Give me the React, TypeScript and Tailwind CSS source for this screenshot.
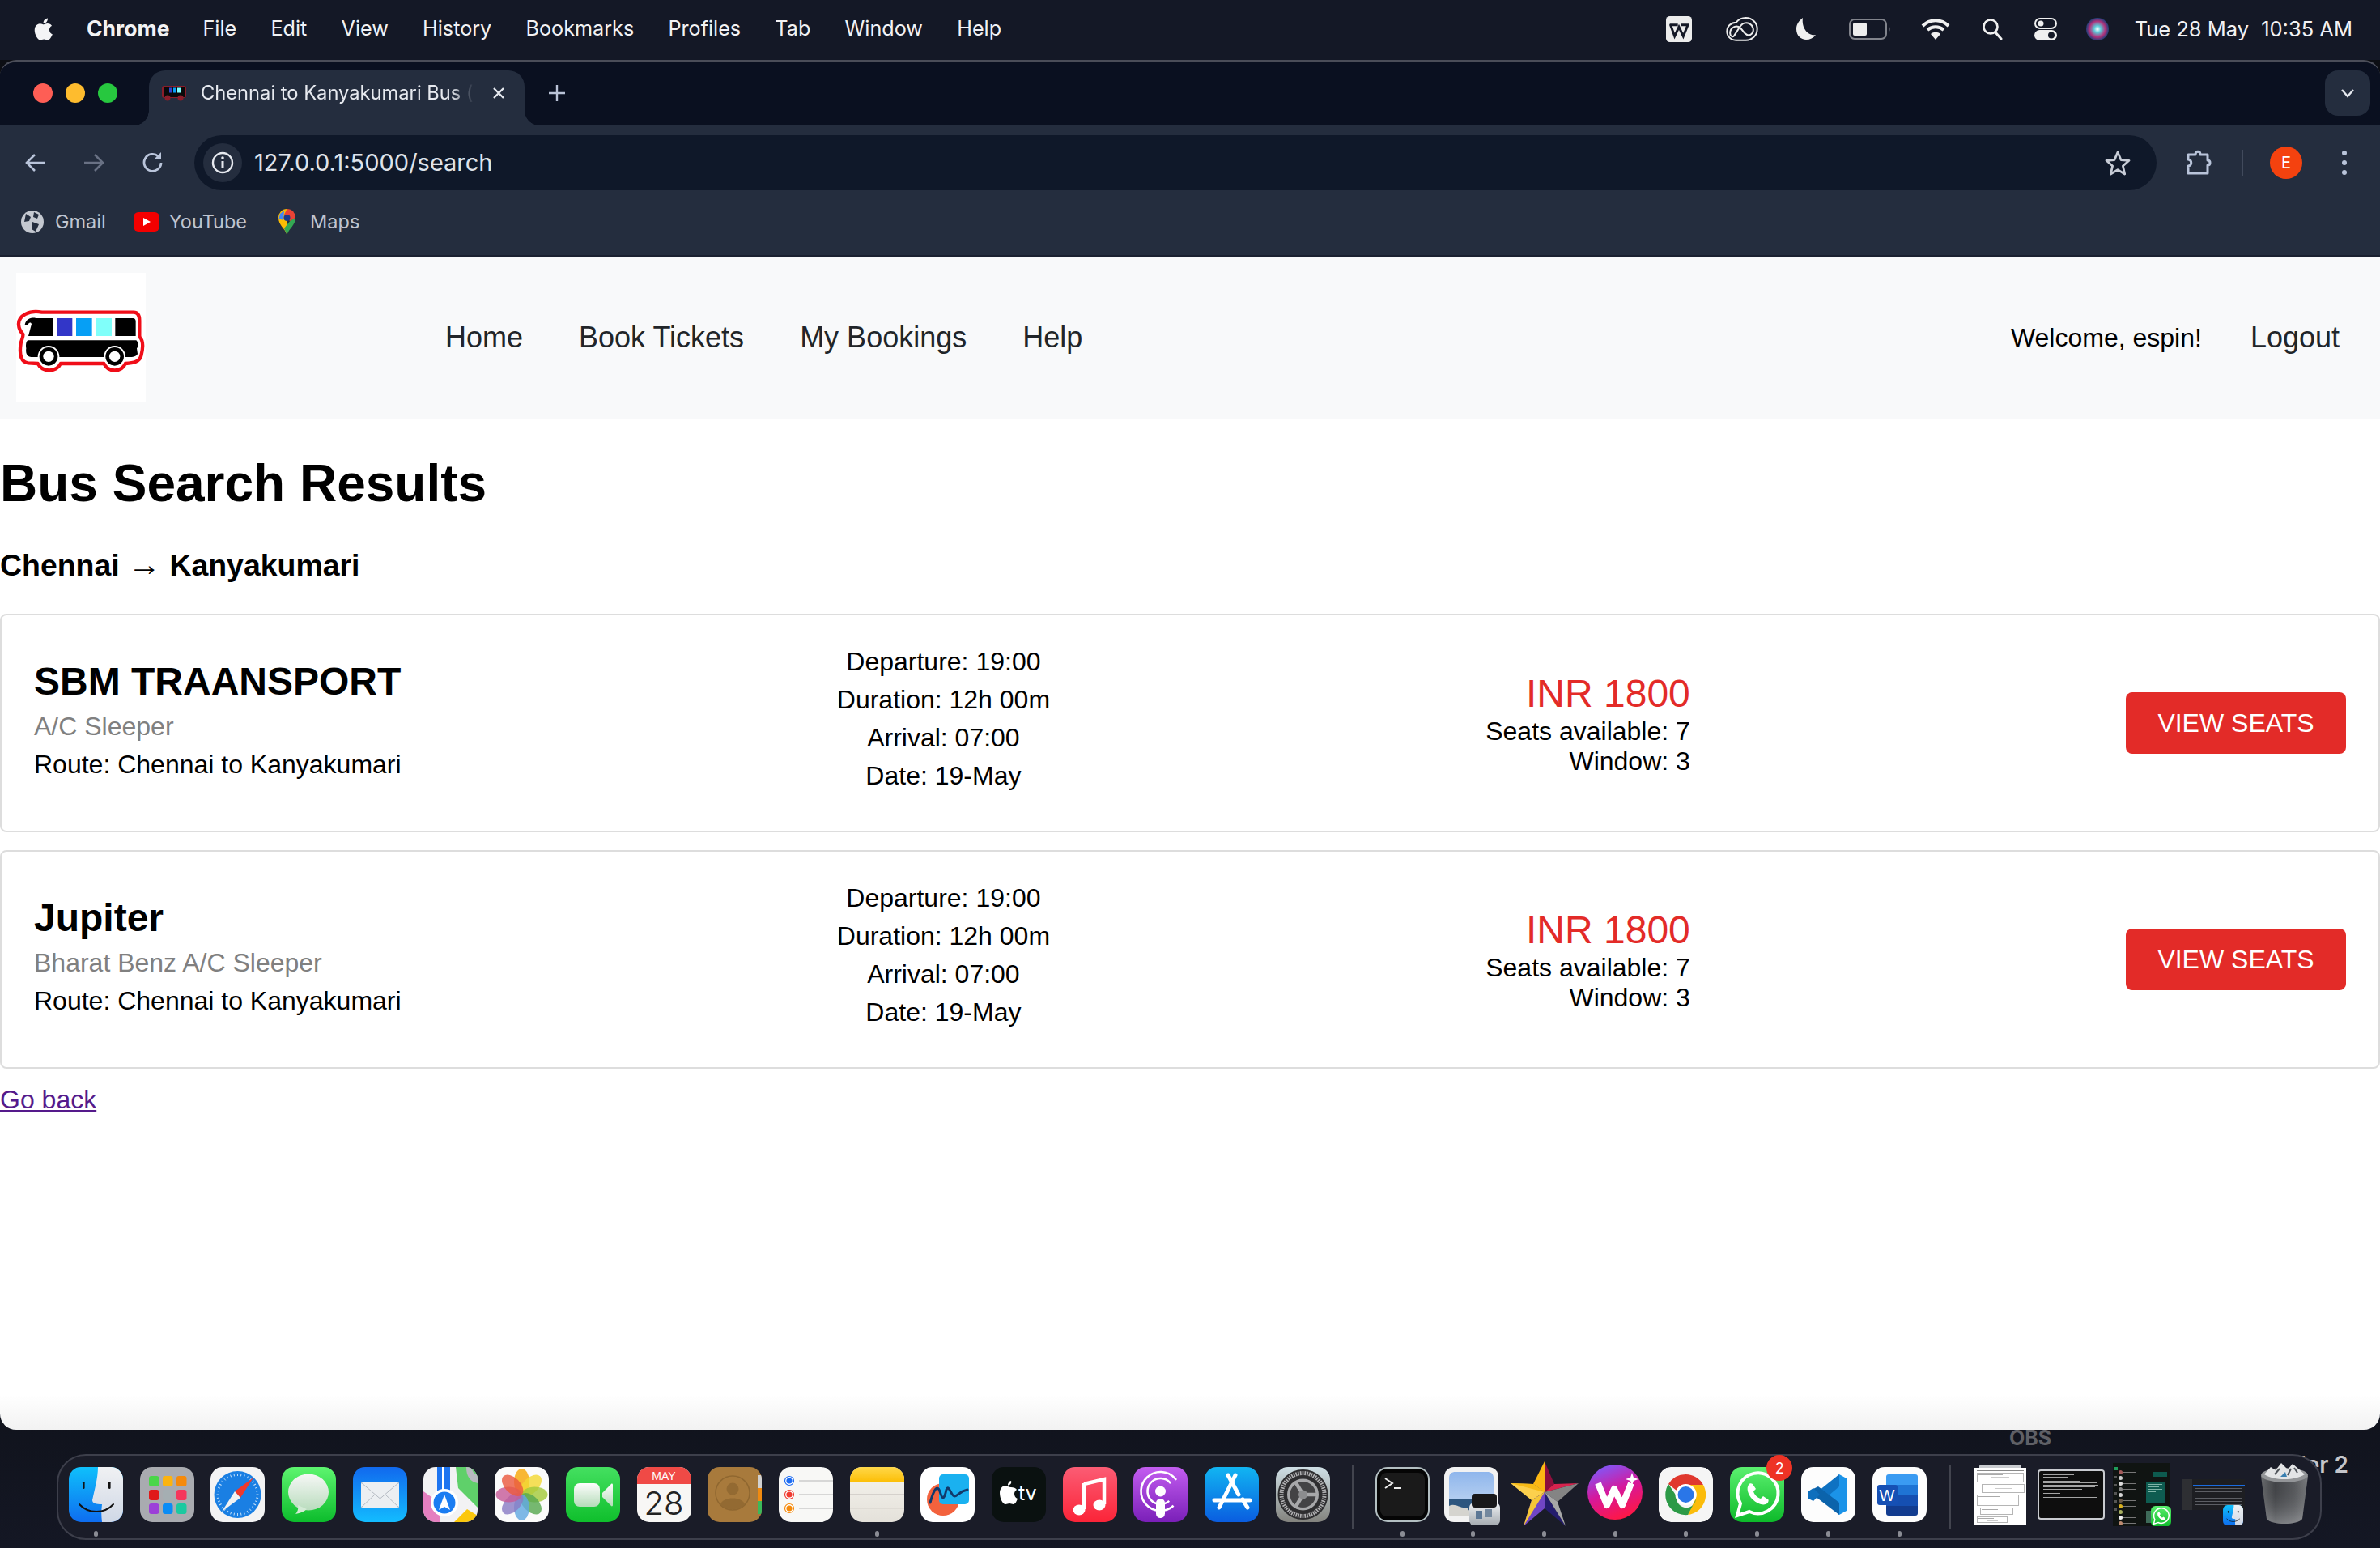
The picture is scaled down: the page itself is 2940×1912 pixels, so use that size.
import React from "react";

function Squircle({ children, id, size = 67 }: { children: React.ReactNode; id: string; size?: number }) {
  return (
    <svg width={size} height={(size * 68) / 67} viewBox="0 0 67 68" className="block shrink-0">
      <defs>
        <clipPath id={id}>
          <rect x="0" y="0" width="67" height="68" rx="15" />
        </clipPath>
      </defs>
      <g clipPath={`url(#${id})`}>{children}</g>
    </svg>
  );
}

function Grad({ id, a, b, c }: { id: string; a: string; b: string; c?: string }) {
  return (
    <linearGradient id={id} x1="0" y1="0" x2="0" y2="1">
      <stop offset="0" stopColor={a} />
      {c ? <stop offset="0.5" stopColor={c} /> : null}
      <stop offset="1" stopColor={b} />
    </linearGradient>
  );
}

const Finder = ({ size = 67, uid = "a" }: { size?: number; uid?: string }) => (
  <Squircle id={`c-finder-${uid}`} size={size}>
    <defs><Grad id={`g-f1-${uid}`} a="#0fc0fb" b="#0e6df0" /><Grad id={`g-f2-${uid}`} a="#f0f1f3" b="#cfd8e6" /></defs>
    <rect width="67" height="68" fill={`url(#g-f1-${uid})`} />
    <path d="M36 0H67V68H41C40 60 40 54 41 46C34 46 29 45 29 41C31 31 36 14 36 0Z" fill={`url(#g-f2-${uid})`} />
    <rect x="17" y="18" width="2.6" height="9" rx="1.3" fill="#111" />
    <rect x="49" y="18" width="2.6" height="9" rx="1.3" fill="#111" />
    <path d="M13 46C24 58 44 58 55 46" stroke="#111" strokeWidth="2" fill="none" strokeLinecap="round" />
  </Squircle>
);

const Launchpad = () => {
  const cols = ["#4ad64a", "#fcb30f", "#f58a0b", "#e01919", "#a5aeb2", "#f5365c", "#9c3fd8", "#0b8cf5", "#1cc9a0"];
  return (
    <Squircle id="c-lp">
      <rect width="67" height="68" fill="#a9abb0" />
      {cols.map((c, i) => (
        <rect key={i} x={11 + (i % 3) * 17} y={11 + Math.floor(i / 3) * 17} width="12.5" height="13" rx="3" fill={c} />
      ))}
    </Squircle>
  );
};

const Safari = () => {
  const ticks = Array.from({ length: 36 }, (_, i) => i * 10);
  return (
    <Squircle id="c-sf">
      <rect width="67" height="68" fill="#f3f3f4" />
      <circle cx="33.5" cy="34" r="29" fill="#1a7fe3" />
      {ticks.map((a) => (
        <line key={a} x1="33.5" y1="8" x2="33.5" y2="11" stroke="#cfe6fa" strokeWidth="0.9" transform={`rotate(${a} 33.5 34)`} />
      ))}
      <polygon points="53,13 37,38 30,30" fill="#f0382b" />
      <polygon points="14,55 30,30 37,38" fill="#f2f2f2" />
    </Squircle>
  );
};

const Messages = () => (
  <Squircle id="c-ms">
    <defs><Grad id="g-ms" a="#5df56f" b="#0cbc2c" /><Grad id="g-ms2" a="#f6f7f6" b="#b9dcbd" /></defs>
    <rect width="67" height="68" fill="url(#g-ms)" />
    <ellipse cx="33" cy="31" rx="25" ry="22.5" fill="url(#g-ms2)" />
    <path d="M20 47C21 52 19 56 17 58C23 57 28 55 31 52Z" fill="#d3ead5" />
  </Squircle>
);

const Mail = () => (
  <Squircle id="c-ml">
    <defs><Grad id="g-ml" a="#1169ee" b="#13bcff" /></defs>
    <rect width="67" height="68" fill="url(#g-ml)" />
    <rect x="10" y="19" width="47" height="31" rx="2" fill="#eceff2" />
    <path d="M10 19L33.5 39L57 19M10 50L27 34M57 50L40 34" stroke="#b4bac2" strokeWidth="1" fill="none" />
  </Squircle>
);

const Maps = () => (
  <Squircle id="c-mp">
    <rect width="67" height="68" fill="#f2f2f4" />
    <path d="M40 0H67V50L43 26Z" fill="#5fd06a" />
    <path d="M0 30L20 44V68H0Z" fill="#e57fc0" />
    <path d="M38 68L54 52L67 60V68Z" fill="#fbc70c" />
    <rect x="17" y="0" width="16" height="34" fill="#1d74f0" />
    <rect x="23" y="0" width="3" height="28" fill="#fff" />
    <path d="M53 0C53 12 58 18 67 20V10C62 8 60 5 60 0Z" fill="#b8b9c0" />
    <circle cx="26" cy="44" r="17" fill="#fff" />
    <circle cx="26" cy="44" r="13.5" fill="#1b7df2" />
    <path d="M26 34L33 53L26 49L19 53Z" fill="#fff" />
  </Squircle>
);

const Photos = () => {
  const cols = ["#f7a70a", "#f3d834", "#a3c93c", "#58a850", "#62a8e0", "#8a7cc4", "#c65c98", "#ea5a40"];
  return (
    <Squircle id="c-ph">
      <rect width="67" height="68" fill="#fbfbfb" />
      {cols.map((c, i) => (
        <ellipse key={i} cx="33.5" cy="18" rx="9.5" ry="16" fill={c} opacity="0.82" transform={`rotate(${i * 45} 33.5 34)`} />
      ))}
    </Squircle>
  );
};

const FaceTime = () => (
  <Squircle id="c-ft">
    <defs><Grad id="g-ft" a="#44e060" b="#0fbf2c" /><Grad id="g-ft2" a="#fdfdfd" b="#b5dcb9" /></defs>
    <rect width="67" height="68" fill="url(#g-ft)" />
    <rect x="10" y="20" width="32" height="29" rx="7" fill="url(#g-ft2)" />
    <path d="M45 32L56 21C57 20 58 21 58 22V47C58 48 57 49 56 48L45 37Z" fill="url(#g-ft2)" />
  </Squircle>
);

const Calendar = () => (
  <div className="flex h-[68px] w-[67px] shrink-0 flex-col rounded-[15px] bg-[#f8f7f5]">
    <div className="flex h-[21px] items-center justify-center rounded-t-[15px] bg-[#f04a46] text-[14px] leading-none text-white">MAY</div>
    <div className="flex flex-1 items-center justify-center font-['Inter',sans-serif] text-[40px] font-light leading-none text-[#222]">28</div>
  </div>
);

const Contacts = () => (
  <Squircle id="c-ct">
    <rect width="67" height="68" fill="#a87a3c" />
    <rect x="62" y="10" width="5" height="16" fill="#d1d1d1" />
    <rect x="62" y="26" width="5" height="16" fill="#f08a10" />
    <rect x="62" y="42" width="5" height="16" fill="#3cb95a" />
    <circle cx="31" cy="32" r="21" fill="none" stroke="#8f6730" strokeWidth="1.5" />
    <circle cx="31" cy="27" r="7.5" fill="#936a32" />
    <path d="M16 46C19 36 43 36 46 46C40 54 22 54 16 46Z" fill="#936a32" />
  </Squircle>
);

const Reminders = () => (
  <Squircle id="c-rm">
    <rect width="67" height="68" fill="#f8f8f6" />
    {[["#1d6cf2", 17], ["#f03a30", 34], ["#f58a0b", 51]].map(([c, y]) => (
      <g key={String(c)}>
        <circle cx="13" cy={y as number} r="5.5" fill="#fff" stroke={c as string} strokeWidth="1.2" />
        <circle cx="13" cy={y as number} r="3.6" fill={c as string} />
        <rect x="25" y={(y as number) - 0.7} width="42" height="1.4" fill="#c9c9c9" />
      </g>
    ))}
  </Squircle>
);

const Notes = () => (
  <Squircle id="c-nt">
    <defs><Grad id="g-nt" a="#ffd84a" b="#fcbf08" /><Grad id="g-nt2" a="#f6f4ee" b="#e4e1da" /></defs>
    <rect width="67" height="68" fill="url(#g-nt2)" />
    <rect width="67" height="18" fill="url(#g-nt)" />
    <rect y="33" width="67" height="1.5" fill="#d5d1cc" />
    <rect y="50" width="67" height="1.5" fill="#d5d1cc" />
  </Squircle>
);

const Freeform = () => (
  <Squircle id="c-fr">
    <rect width="67" height="68" fill="#fff" />
    <circle cx="28" cy="40" r="20" fill="#f3623d" />
    <rect x="23" y="9" width="37" height="37" rx="5" fill="#1ab1f0" />
    <path d="M12 44C17 26 21 22 24 30C27 40 29 42 32 28C35 20 38 36 42 36C46 36 48 30 58 28" fill="none" stroke="#123a6b" strokeWidth="3" strokeLinecap="round" />
  </Squircle>
);

const AppleTV = () => (
  <div className="relative h-[68px] w-[67px] shrink-0 rounded-[15px] bg-[#0a1110]">
    <svg width="67" height="68" viewBox="0 0 67 68" className="absolute inset-0">
      <path d="M24 25C21 25 19 23 17 23C13 23 10 27 10 32C10 39 14 46 17 46C19 46 20 45 22 45C24 45 25 46 27 46C29 46 31 42 32 39C29 38 28 35 28 33C28 31 29 29 31 28C30 26 27 25 24 25ZM24 17C22 17 20 20 20 22.5C23 22.5 25 20 24 17Z" fill="#fff" />
    </svg>
    <span className="absolute left-[33px] top-[18px] font-['Inter',sans-serif] text-[25px] leading-[28px] text-white">tv</span>
  </div>
);

const Music = () => (
  <Squircle id="c-mu">
    <defs><Grad id="g-mu" a="#fb5c74" b="#fb2438" /></defs>
    <rect width="67" height="68" fill="url(#g-mu)" />
    <path d="M26 21L51 15V46" stroke="#fff" strokeWidth="4.5" fill="none" />
    <path d="M26 20V52" stroke="#fff" strokeWidth="4.5" fill="none" />
    <ellipse cx="20" cy="53" rx="7.5" ry="6.5" fill="#fff" />
    <ellipse cx="45" cy="47" rx="7.5" ry="6.5" fill="#fff" />
  </Squircle>
);

const Podcasts = () => (
  <Squircle id="c-pd">
    <defs><Grad id="g-pd" a="#c35df0" b="#7a1fb8" /></defs>
    <rect width="67" height="68" fill="url(#g-pd)" />
    <circle cx="33.5" cy="30" r="24" fill="none" stroke="#fff" strokeWidth="2.6" strokeDasharray="115 36" transform="rotate(48 33.5 30)" />
    <circle cx="33.5" cy="30" r="16" fill="none" stroke="#fff" strokeWidth="2.6" strokeDasharray="76 25" transform="rotate(48 33.5 30)" />
    <circle cx="33.5" cy="30" r="6.5" fill="#fff" />
    <rect x="28" y="39" width="11" height="24" rx="5.5" fill="#fff" />
  </Squircle>
);

const AppStore = () => (
  <Squircle id="c-as">
    <defs><Grad id="g-as" a="#11b5f2" b="#0a5de0" /></defs>
    <rect width="67" height="68" fill="url(#g-as)" />
    <path d="M38 10L18 50M29 10L42 34M47 40L53 50" stroke="#fff" strokeWidth="5" strokeLinecap="round" />
    <path d="M12 41H56" stroke="#fff" strokeWidth="5" strokeLinecap="round" />
  </Squircle>
);

const Settings = () => {
  const t = Array.from({ length: 60 }, (_, i) => i * 6);
  return (
    <Squircle id="c-st">
      <defs><Grad id="g-st" a="#cfdfe5" b="#83837e" /></defs>
      <rect width="67" height="68" fill="url(#g-st)" />
      <circle cx="33.5" cy="34" r="31" fill="#2e2e30" />
      {t.map((a) => (
        <line key={a} x1="33.5" y1="5" x2="33.5" y2="10" stroke="#b0b0b2" strokeWidth="1.7" transform={`rotate(${a} 33.5 34)`} />
      ))}
      <circle cx="33.5" cy="34" r="22" fill="#2e2e30" />
      <circle cx="33.5" cy="34" r="19.5" fill="#a7a8aa" />
      <circle cx="33.5" cy="34" r="16" fill="#434345" />
      <path d="M33.5 34L24 18M33.5 34H52M33.5 34L24 50" stroke="#a7a8aa" strokeWidth="4.5" />
      <circle cx="33.5" cy="34" r="5.5" fill="#8b8c8e" />
    </Squircle>
  );
};

const Terminal = () => (
  <Squircle id="c-tm">
    <rect width="67" height="68" fill="#b3bfc2" />
    <rect x="2" y="2" width="63" height="64" rx="13" fill="#050505" />
    <rect x="6" y="7" width="55" height="54" rx="8" fill="#1a1a1a" />
    <path d="M12 14L21 20L12 26" stroke="#eee" strokeWidth="2" fill="none" />
    <rect x="23" y="25" width="9" height="2" fill="#eee" />
  </Squircle>
);

const Preview = () => (
  <svg width="72" height="74" viewBox="0 0 72 74" className="block shrink-0">
    <defs>
      <Grad id="g-pv" a="#8fb6ec" b="#c9dcf3" />
      <linearGradient id="g-pv2" x1="0" y1="0" x2="0" y2="1">
        <stop offset="0" stopColor="#f0f2f4" />
        <stop offset="1" stopColor="#a5abb1" />
      </linearGradient>
    </defs>
    <rect x="0" y="0" width="67" height="68" rx="12" fill="#f2f2f2" />
    <path d="M6 14C6 8 9 6 14 6H53C58 6 61 8 61 14V60H6Z" fill="url(#g-pv)" />
    <rect x="6" y="40" width="55" height="20" fill="#2d567f" />
    <path d="M6 48C14 44 20 52 28 50L36 60H6Z" fill="#d5d4cf" />
    <rect x="31" y="44" width="38" height="28" rx="6" fill="url(#g-pv2)" />
    <rect x="34" y="33" width="31" height="17" rx="4" fill="#18181a" />
    <rect x="39" y="54" width="8" height="10" fill="#5d7896" />
    <rect x="51" y="52" width="8" height="10" fill="#74889e" />
  </svg>
);

const Star = () => (
  <svg width="84" height="80" viewBox="0 0 84 80" className="block shrink-0">
    <polygon points="42,0 42,38 28,28" fill="#fdb813" />
    <polygon points="42,0 42,38 54,28" fill="#8d0f3d" />
    <polygon points="0,27 28,28 42,38 26,48" fill="#fcd04d" />
    <polygon points="0,27 42,38 28,28" fill="#f7ba16" />
    <polygon points="84,27 54,28 42,38" fill="#d8234e" />
    <polygon points="84,27 42,38 58,50" fill="#848484" />
    <polygon points="16,80 26,48 42,38 42,58" fill="#7045c5" />
    <polygon points="16,80 26,48 42,38" fill="#f5c635" />
    <polygon points="68,80 42,58 42,38" fill="#241c6e" />
    <polygon points="68,80 58,50 42,38" fill="#a7a7a7" />
  </svg>
);

const Wps = () => (
  <svg width="68" height="68" viewBox="0 0 68 68" className="block shrink-0">
    <defs>
      <linearGradient id="g-wp" x1="0.2" y1="0" x2="0.6" y2="1">
        <stop offset="0" stopColor="#7a5cff" />
        <stop offset="0.5" stopColor="#d6189c" />
        <stop offset="1" stopColor="#ff1744" />
      </linearGradient>
    </defs>
    <circle cx="34" cy="34" r="34" fill="url(#g-wp)" />
    <path d="M13 23L24 50L33 30L43 50L54 23" fill="none" stroke="#fff" strokeWidth="8" strokeLinejoin="round" />
    <path d="M55 10L57 16L63 18L57 20L55 26L53 20L47 18L53 16Z" fill="#fff" />
  </svg>
);

const ChromeIcon = () => (
  <Squircle id="c-ch">
    <rect width="67" height="68" rx="15" fill="#f5f5f5" />
    <path d="M33.5 9A25 25 0 0 1 55 22H33.5A12 12 0 0 0 22 29L12 21A25 25 0 0 1 33.5 9Z" fill="#e0382e" />
    <path d="M55 22A25 25 0 0 1 36 59L46 38A12 12 0 0 0 33.5 22Z" fill="#fbbc0b" />
    <path d="M12 21A25 25 0 0 0 36 59L46 40A12 12 0 0 1 22 36Z" fill="#2c9a47" />
    <circle cx="33.5" cy="34" r="13" fill="#fff" />
    <circle cx="33.5" cy="34" r="10" fill="#2a76e8" />
  </Squircle>
);

const WhatsAppGlyph = ({ size = 67, uid = "a" }: { size?: number; uid?: string }) => (
  <Squircle id={`c-wa-${uid}`} size={size}>
    <defs><Grad id={`g-wa-${uid}`} a="#5bf06f" b="#0dba2a" /></defs>
    <rect width="67" height="68" fill={`url(#g-wa-${uid})`} />
    <path d="M9 60L13 45A25 25 0 1 1 24 55Z" fill="none" stroke="#fff" strokeWidth="4" />
    <path d="M23 22C20 26 22 34 28 40C34 46 42 48 46 45C48 43 48 40 47 40L41 36L38 39C34 38 30 34 29 30L32 27L28 21C26 20 24 20 23 22Z" fill="#fff" />
  </Squircle>
);

const WhatsApp = () => (
  <div className="relative shrink-0">
    <WhatsAppGlyph />
    <div className="absolute -top-[15px] -right-[10px] flex h-[32px] w-[32px] items-center justify-center rounded-full bg-[#ee3325] font-['Inter',sans-serif] text-[18px] text-white">2</div>
  </div>
);

const VSCode = () => (
  <Squircle id="c-vs">
    <rect width="67" height="68" fill="#fdfdfd" />
    <path d="M47 9L56 14V54L47 59L20 34Z" fill="#1b93e8" />
    <path d="M47 9L47 24L27 41L17 33Z" fill="#0f72c2" />
    <path d="M47 59V44L21 24L9 30Z" fill="#0b63ab" />
    <path d="M9 30L15 26L23 34L15 42L9 39Z" fill="#0e6fbd" />
  </Squircle>
);

const Word = () => (
  <div className="relative h-[68px] w-[67px] shrink-0 rounded-[15px] bg-[#fdfdfd]">
    <div className="absolute left-[17px] top-[9px] flex h-[51px] w-[39px] flex-col overflow-hidden rounded-[3px]">
      <div className="h-[13px] bg-[#3a9bf2]" />
      <div className="h-[13px] bg-[#1f74d4]" />
      <div className="h-[13px] bg-[#154fb1]" />
      <div className="h-[12px] bg-[#123c8f]" />
    </div>
    <div className="absolute left-[6px] top-[22px] flex h-[25px] w-[25px] items-center justify-center rounded-[3px] bg-[#1650b4] text-[20px] leading-none text-white">W</div>
  </div>
);

const Dot = ({ on }: { on?: boolean }) => (
  <div className={on ? "mx-auto mt-[11px] h-[7px] w-[5px] rounded-full bg-[#8a8c94]" : "mt-[11px] h-[7px] w-[5px]"} />
);

function DockItem({ children, on, w = 67 }: { children: React.ReactNode; on?: boolean; w?: number }) {
  return (
    <div className="flex shrink-0 flex-col items-center" style={{ width: w }}>
      <div className="flex h-[68px] items-start justify-center">{children}</div>
      <Dot on={on} />
    </div>
  );
}

const Doc1 = () => {
  const rows = [
    [0, 100, 12], [6, 92, 11], [0, 90, 14], [4, 70, 9], [0, 65, 8],
  ];
  return (
    <div className="relative mt-[1px] h-[71px] w-[64px] shrink-0">
      <div className="absolute -top-[4px] left-[6px] h-[10px] w-[52px] rounded-t-[2px] bg-[#c9ccd0]" />
      <div className="absolute inset-0 bg-white px-[3px] py-[3px]">
        <div className="mb-[2px] h-[1px] w-full bg-[#888]" />
        {rows.map(([ml, w, h], i) => (
          <div key={i} className="mb-[2px] border border-[#b5b5b5] p-[1px]" style={{ marginLeft: ml, width: `${w}%`, height: h }}>
            <div className="h-[1px] w-[55%] bg-[#aaa]" />
            <div className="mt-[2px] ml-[30%] h-[1px] w-[40%] bg-[#ccc]" />
          </div>
        ))}
      </div>
    </div>
  );
};

const Doc2 = () => (
  <div className="mt-[3px] h-[62px] w-[83px] shrink-0 rounded-[4px] border-2 border-[#c9cbd0] bg-[#0e0e0e] px-[5px] pt-[4px]">
    {[55, 45, 0, 65, 95, 98, 92, 70, 38, 30, 98, 96, 72].map((w, i) => (
      <div key={i} className="mb-[1.5px] h-[1px] bg-[#a5a5a5]" style={{ width: `${w}%` }} />
    ))}
  </div>
);

const Doc3 = () => {
  const av = ["#a35a5a", "#ccc", "#ddd", "#888", "#d6d6d6", "#6a5a4a", "#d8b020", "#a8b060", "#eee", "#bb8a70"];
  return (
    <div className="relative -mt-[5px] h-[78px] w-[72px] shrink-0">
      <div className="absolute inset-y-0 left-0 flex h-[78px] w-[70px] bg-[#101412]">
        <div className="flex w-[7px] flex-col items-center gap-[7px] pt-[5px]">
          {[0, 1, 2, 3, 4, 5].map((i) => (
            <div key={i} className={i === 0 ? "h-[4px] w-[4px] bg-[#1f9c5a]" : "h-[3px] w-[3px] bg-[#555]"} />
          ))}
        </div>
        <div className="w-[28px] pt-[9px]">
          {av.map((c, i) => (
            <div key={i} className="mb-[2px] flex h-[5px] items-center gap-[1px]">
              <div className="h-[5px] w-[5px] rounded-full" style={{ backgroundColor: c }} />
              <div className="h-[1px] w-[15px] bg-[#777]" />
            </div>
          ))}
        </div>
        <div className="flex-1 pl-[6px] pt-[11px]">
          <div className="ml-[8px] h-[6px] w-[18px] bg-[#0d5a4e]" />
          <div className="mt-[7px] h-[26px] w-[24px] bg-[#0e5c50] p-[2px]">
            <div className="mb-[2px] h-[1px] w-[18px] bg-[#7fb5a8]" />
            <div className="mb-[2px] h-[1px] w-[14px] bg-[#7fb5a8]" />
            <div className="mb-[2px] h-[1px] w-[18px] bg-[#7fb5a8]" />
            <div className="h-[1px] w-[10px] bg-[#7fb5a8]" />
          </div>
          <div className="mt-[9px] h-[15px] w-[14px] bg-[#3e6a58]" />
        </div>
      </div>
      <div className="absolute bottom-0 right-0"><WhatsAppGlyph size={25} uid="m" /></div>
    </div>
  );
};

const Doc4 = () => (
  <div className="relative mt-[15px] h-[38px] w-[78px] shrink-0 bg-[#1d1e22] pl-[14px] pt-[7px]">
    <div className="absolute left-0 top-0 h-full w-[13px] bg-[#2e2f33]" />
    <div className="relative h-[1px] w-[64px] bg-[#1a6be0]" />
    {[0, 1, 2, 3, 4, 5, 6].map((i) => (
      <div key={i} className="relative mt-[3px] ml-[2px] h-[1px] w-[58px] bg-[#5c5e64]" />
    ))}
    <div className="absolute -bottom-[19px] right-[2px]"><Finder size={25} uid="m" /></div>
  </div>
);

const Trash = () => (
  <svg width="60" height="77" viewBox="0 0 60 77" className="-mt-[6px] block shrink-0">
    <defs>
      <linearGradient id="g-tr" x1="0" y1="0" x2="1" y2="0">
        <stop offset="0" stopColor="#6d6f72" />
        <stop offset="0.3" stopColor="#45474b" />
        <stop offset="0.7" stopColor="#5c5e62" />
        <stop offset="1" stopColor="#7e8083" />
      </linearGradient>
      <linearGradient id="g-tr2" x1="0" y1="0" x2="0" y2="1">
        <stop offset="0" stopColor="#000" stopOpacity="0" />
        <stop offset="1" stopColor="#b8babd" stopOpacity="0.45" />
      </linearGradient>
    </defs>
    <path d="M1 17L8 70C14 78 46 78 52 70L59 17Z" fill="url(#g-tr)" />
    <path d="M1 17L8 70C14 78 46 78 52 70L59 17Z" fill="url(#g-tr2)" />
    <ellipse cx="30" cy="16" rx="29" ry="9" fill="#939598" />
    <path d="M5 15L13 6L19 10L26 1L34 9L40 2L47 8L55 15C42 23 18 23 5 15Z" fill="#e3e4e6" />
    <path d="M18 15L24 8M34 16L38 8M46 13L42 7" stroke="#50545a" strokeWidth="2" />
    <path d="M25 18L31 12L33 18Z" fill="#3a7fb0" />
  </svg>
);

const Sep = ({ m }: { m: string }) => <div className={`${m} mt-[-2px] h-[78px] w-[2px] shrink-0 bg-[#42444e]`} />;

function Dock() {
  return (
    <div className="relative z-10 ml-[70px] flex h-[106px] w-[2798px] shrink-0 items-start rounded-[36px] border-2 border-[#3d3f4b] bg-[#1a1c28] pl-[13px] pt-[14px]">
      <div className="flex items-start gap-[20.7px]">
        <DockItem on><Finder /></DockItem>
        <DockItem><Launchpad /></DockItem>
        <DockItem><Safari /></DockItem>
        <DockItem><Messages /></DockItem>
        <DockItem><Mail /></DockItem>
        <DockItem><Maps /></DockItem>
        <DockItem><Photos /></DockItem>
        <DockItem><FaceTime /></DockItem>
        <DockItem><Calendar /></DockItem>
        <DockItem><Contacts /></DockItem>
        <DockItem><Reminders /></DockItem>
        <DockItem on><Notes /></DockItem>
        <DockItem><Freeform /></DockItem>
        <DockItem><AppleTV /></DockItem>
        <DockItem><Music /></DockItem>
        <DockItem><Podcasts /></DockItem>
        <DockItem><AppStore /></DockItem>
        <DockItem><Settings /></DockItem>
      </div>
      <Sep m="mx-[27px]" />
      <div className="flex items-start gap-[20.7px]">
        <DockItem on><Terminal /></DockItem>
        <DockItem on><Preview /></DockItem>
        <DockItem on><div className="-mt-[7px]"><Star /></div></DockItem>
        <DockItem on><div className="-mt-[3px]"><Wps /></div></DockItem>
        <DockItem on><ChromeIcon /></DockItem>
        <DockItem on><WhatsApp /></DockItem>
        <DockItem on><VSCode /></DockItem>
        <DockItem on><Word /></DockItem>
      </div>
      <Sep m="mx-[28px]" />
      <div className="flex items-start gap-[20.7px]">
        <DockItem><Doc1 /></DockItem>
        <DockItem><Doc2 /></DockItem>
        <DockItem><Doc3 /></DockItem>
        <DockItem><Doc4 /></DockItem>
        <DockItem><Trash /></DockItem>
      </div>
    </div>
  );
}

function MenuBar() {
  const items = ["File", "Edit", "View", "History", "Bookmarks", "Profiles", "Tab", "Window", "Help"];
  return (
    <div className="flex h-[74px] shrink-0 items-center bg-[#141826] pb-[2px] pl-[41px] pr-[34px] font-['Inter',sans-serif] text-[25.2px] text-[#f2f2f4]">
      <svg width="28" height="32" viewBox="0 0 28 32" className="mr-[38px] -mt-[1px]">
        <path d="M20 17C20 13.5 22.8 12 23 11.8C21.4 9.5 19 9.2 18 9.1C16 8.9 14 10.3 13 10.3C12 10.3 10.3 9.1 8.5 9.2C6.2 9.2 4.1 10.5 2.9 12.6C0.5 16.7 2.3 22.8 4.6 26.2C5.8 27.9 7.1 29.7 8.9 29.6C10.6 29.6 11.3 28.5 13.3 28.5C15.4 28.5 16 29.6 17.8 29.6C19.6 29.6 20.8 27.9 21.9 26.2C23.2 24.3 23.8 22.4 23.8 22.3C23.7 22.3 20 20.9 20 17ZM16.6 6.9C17.5 5.8 18.2 4.2 18 2.6C16.6 2.7 14.9 3.5 14 4.6C13.1 5.6 12.4 7.2 12.6 8.8C14.1 8.9 15.7 8 16.6 6.9Z" fill="#f4f4f6" />
      </svg>
      <span className="mr-[41px] text-[26.5px] font-bold">Chrome</span>
      <div className="flex items-center gap-[42.2px]">
        {items.map((t) => <span key={t}>{t}</span>)}
      </div>
      <div className="flex-1" />
      <div className="flex items-center text-[25.5px]">
        <svg width="32" height="32" viewBox="48 30 96 96" className="mr-[42px]">
          <rect x="48" y="30" width="96" height="96" rx="14" fill="#ececec" />
          <path d="M62 62H92M102 62H132M64 60L80 104L96 70L112 104L130 60" fill="none" stroke="#141826" strokeWidth="9" />
        </svg>
        <svg width="40" height="30" viewBox="268 32 120 90" className="mr-[44px]">
          <path d="M305 118C285 118 272 103 272 85C272 66 288 52 306 52C315 40 330 35 342 35C365 35 384 53 384 76C384 100 365 118 342 118Z" fill="none" stroke="#ececec" strokeWidth="6" />
          <path d="M285 100C278 78 298 62 315 68C325 72 330 84 338 92C346 100 356 102 364 94C374 84 370 64 356 57C342 50 328 56 320 68L298 102C296 106 290 106 285 100Z" fill="none" stroke="#ececec" strokeWidth="6" />
        </svg>
        <svg width="30" height="30" viewBox="0 0 30 30" className="mr-[38px]">
          <path d="M11 1C6 5 3 9 3 15C3 23 9 28 15 28C20 28 24 26 27 22C18 24 9 14 11 1Z" fill="#f0f0f0" />
        </svg>
        <svg width="52" height="26" viewBox="0 0 52 26" className="mr-[37px]">
          <rect x="1" y="1" width="45" height="24" rx="6" fill="none" stroke="#82848c" strokeWidth="2" />
          <rect x="5" y="5" width="17" height="16" rx="2" fill="#ededed" />
          <path d="M49 9C51 10 51 16 49 17Z" fill="#82848c" />
        </svg>
        <svg width="36" height="28" viewBox="0 0 36 28" className="mr-[39px]">
          <path d="M2 10C11 1 25 1 34 10M8 15C14 10 22 10 28 15" fill="none" stroke="#f0f0f0" strokeWidth="4" />
          <path d="M18 27L12 20C15 17 21 17 24 20Z" fill="#f0f0f0" />
        </svg>
        <svg width="26" height="28" viewBox="0 0 26 28" className="mr-[39px]">
          <circle cx="11" cy="11" r="8.5" fill="none" stroke="#f0f0f0" strokeWidth="2.6" />
          <path d="M17 18L24 26" stroke="#f0f0f0" strokeWidth="3" strokeLinecap="round" />
        </svg>
        <svg width="28" height="28" viewBox="0 0 28 28" className="mr-[36px]">
          <rect x="1" y="1" width="26" height="12" rx="6" fill="none" stroke="#f0f0f0" strokeWidth="2" />
          <circle cx="8" cy="7" r="3.5" fill="#f0f0f0" />
          <rect y="15" width="28" height="13" rx="6.5" fill="#f0f0f0" />
          <circle cx="21" cy="21.5" r="4" fill="#141826" />
        </svg>
        <svg width="28" height="28" viewBox="0 0 28 28" className="mr-[32px]">
          <defs>
            <radialGradient id="g-siri" cx="0.5" cy="0.5" r="0.5">
              <stop offset="0" stopColor="#fff" />
              <stop offset="0.3" stopColor="#5cc8d8" />
              <stop offset="0.7" stopColor="#b0307a" />
              <stop offset="1" stopColor="#1f3f7a" />
            </radialGradient>
          </defs>
          <circle cx="14" cy="14" r="14" fill="url(#g-siri)" />
        </svg>
        <span>Tue 28 May</span>
        <span className="ml-[15px]">10:35 AM</span>
      </div>
    </div>
  );
}

function TabStrip() {
  return (
    <div className="flex h-[78px] shrink-0 items-end bg-[#0a1020] pl-[41px] pr-[12px]">
      <div className="flex h-[68px] w-[143px] items-start gap-[16px] pt-[16px]">
        <div className="h-[24px] w-[24px] rounded-full bg-[#fe5e55]" />
        <div className="h-[24px] w-[24px] rounded-full bg-[#febc2e]" />
        <div className="h-[24px] w-[24px] rounded-full bg-[#27c83f]" />
      </div>
      <div className="relative flex h-[68px] w-[464px] items-center rounded-t-[20px] bg-[#242d3e] pb-[12px] pl-[15px]">
        <div className="absolute bottom-0 -left-[18px] h-[18px] w-[18px] bg-[radial-gradient(circle_at_0_0,#0a1020_17.5px,#242d3e_18px)]" />
        <div className="absolute bottom-0 -right-[18px] h-[18px] w-[18px] bg-[radial-gradient(circle_at_100%_0,#0a1020_17.5px,#242d3e_18px)]" />
        <svg width="32" height="20" viewBox="0 0 32 20" className="mr-[17px] shrink-0">
          <rect x="1" y="1" width="30" height="15" rx="3" fill="#8b1d2a" />
          <rect x="3" y="3" width="26" height="12" fill="#0a0a0a" />
          <rect x="10" y="3.5" width="4" height="6" fill="#3344cc" />
          <rect x="15" y="3.5" width="4" height="6" fill="#06a0f4" />
          <rect x="20" y="3.5" width="4" height="6" fill="#80ffff" />
          <circle cx="8" cy="16" r="3.5" fill="#8b1d2a" />
          <circle cx="24" cy="16" r="3.5" fill="#8b1d2a" />
        </svg>
        <span className="shrink-0 whitespace-nowrap font-['Inter',sans-serif] text-[23.7px] text-[#e6e9ef] [mask-image:linear-gradient(to_right,black_92%,transparent_100%)]">
          Chennai to Kanyakumari Bus (
        </span>
        <svg width="16" height="16" viewBox="0 0 16 16" className="ml-auto mr-[24px]">
          <path d="M2 2L14 14M14 2L2 14" stroke="#e6e9ef" strokeWidth="2.4" />
        </svg>
      </div>
      <div className="flex h-[68px] items-center pb-[12px] pl-[29px]">
        <svg width="22" height="22" viewBox="0 0 22 22">
          <path d="M11 1V21M1 11H21" stroke="#b9c2d6" strokeWidth="2.4" />
        </svg>
      </div>
      <div className="flex-1" />
      <div className="mb-[12px] flex h-[56px] w-[56px] items-center justify-center rounded-[16px] bg-[#242d3e]">
        <svg width="20" height="12" viewBox="0 0 20 12">
          <path d="M3 2L10 10L17 2" fill="none" stroke="#e6e9ef" strokeWidth="2.4" />
        </svg>
      </div>
    </div>
  );
}

function Toolbar() {
  return (
    <div className="flex h-[92px] shrink-0 items-start bg-[#242d3e] pl-[30px] pt-[12px]">
      <div className="flex h-[68px] w-[210px] items-center gap-[44px]">
        <svg width="28" height="28" viewBox="0 0 28 28">
          <path d="M26 14H4M13 4L3 14L13 24" fill="none" stroke="#b9c4da" strokeWidth="2.6" />
        </svg>
        <svg width="28" height="28" viewBox="0 0 28 28">
          <path d="M2 14H24M15 4L25 14L15 24" fill="none" stroke="#697184" strokeWidth="2.6" />
        </svg>
        <svg width="30" height="30" viewBox="0 0 30 30">
          <path d="M25 15A10.5 10.5 0 1 1 21.5 7" fill="none" stroke="#b9c4da" strokeWidth="2.8" />
          <path d="M25 2V11H16Z" fill="#b9c4da" />
        </svg>
      </div>
      <div className="flex h-[68px] w-[2424px] shrink-0 items-center rounded-full bg-[#0f1829] pl-[11px] pr-[31px]">
        <div className="flex h-[48px] w-[48px] items-center justify-center rounded-full bg-[#242d3e]">
          <svg width="30" height="30" viewBox="0 0 30 30">
            <circle cx="15" cy="15" r="12" fill="none" stroke="#e6e9ef" strokeWidth="2.4" />
            <path d="M15 13V22" stroke="#e6e9ef" strokeWidth="3" />
            <circle cx="15" cy="9" r="1.8" fill="#e6e9ef" />
          </svg>
        </div>
        <span className="ml-[15px] font-['Inter',sans-serif] text-[29px] text-[#dfe3ea]">127.0.0.1:5000/search</span>
        <div className="flex-1" />
        <svg width="34" height="32" viewBox="0 0 34 32">
          <path d="M17 3L21 12.5L31 13.3L23.4 20L25.7 30L17 24.6L8.3 30L10.6 20L3 13.3L13 12.5Z" fill="none" stroke="#c7ccd6" strokeWidth="2.8" strokeLinejoin="round" />
        </svg>
      </div>
      <div className="flex h-[68px] items-center">
        <svg width="34" height="34" viewBox="0 0 34 34" className="ml-[35px]">
          <path d="M4 7H13C13 2 19 2 19 7H28V14C32 14 32 20 28 20V30H4V21C9 21 9 13 4 13Z" fill="none" stroke="#b9c4da" strokeWidth="3" strokeLinejoin="round" />
        </svg>
        <div className="ml-[36px] h-[32px] w-[2px] bg-[#414a5c]" />
        <div className="ml-[33px] flex h-[40px] w-[40px] items-center justify-center rounded-full bg-[#f4420f] font-['Inter',sans-serif] text-[20px] text-white">E</div>
        <div className="ml-[49px] flex flex-col gap-[6px]">
          <div className="h-[6px] w-[6px] rounded-full bg-[#b9c4da]" />
          <div className="h-[6px] w-[6px] rounded-full bg-[#b9c4da]" />
          <div className="h-[6px] w-[6px] rounded-full bg-[#b9c4da]" />
        </div>
      </div>
    </div>
  );
}

function Bookmarks() {
  return (
    <div className="flex h-[70px] shrink-0 items-start gap-[34px] border-b-[2px] border-[#1a2030] bg-[#242d3e] pl-[26px] pt-[9px] font-['Inter',sans-serif] text-[23.5px] text-[#bfc5d1]">
      <div className="flex items-center gap-[14px]">
        <svg width="28" height="28" viewBox="0 0 28 28">
          <circle cx="14" cy="14" r="14" fill="#c4c8d0" />
          <path d="M6 4L12 8L10 13L4 14ZM16 2L22 5L20 10L15 8ZM14 14L22 17L18 26L13 23Z" fill="#242d3e" />
        </svg>
        <span>Gmail</span>
      </div>
      <div className="flex items-center gap-[12px]">
        <svg width="32" height="24" viewBox="0 0 32 24">
          <rect width="32" height="24" rx="6" fill="#f40000" />
          <path d="M12 7L21 12L12 17Z" fill="#fff" />
        </svg>
        <span>YouTube</span>
      </div>
      <div className="ml-[4px] flex items-center gap-[17px]">
        <svg width="23" height="32" viewBox="0 0 23 32">
          <path d="M11.5 32C9 24 1 20 1 11A10.5 10.5 0 0 1 11.5 0Z" fill="#fbbc04" />
          <path d="M11.5 32C14 24 22 20 22 11L16 14L8 24Z" fill="#34a853" />
          <path d="M11.5 0A10.5 10.5 0 0 1 22 11L15 15L8 7Z" fill="#ea4335" />
          <path d="M8 2L3 6L1.5 12L7 14Z" fill="#4285f4" />
          <circle cx="11.5" cy="11" r="4" fill="#1a3a8a" />
        </svg>
        <span>Maps</span>
      </div>
    </div>
  );
}

function BusLogo() {
  return (
    <svg width="160" height="160" viewBox="0 0 160 160">
      <g transform="translate(-5 34) scale(0.33333)">
        <path d="M24 90C22 55 65 35 110 44L450 44C468 44 472 60 472 75L472 135C488 150 486 175 478 205C472 228 450 232 420 234C405 268 355 268 340 234L180 234C165 268 110 268 95 234L60 232C35 230 25 205 32 160C35 145 42 135 40 125C30 115 25 105 24 90Z" fill="#fff" stroke="#f00d18" strokeWidth="13" strokeLinejoin="round" />
        <path d="M47 90C52 68 72 62 88 66L152 66L152 132L60 132L72 88C70 78 60 82 57 92Z" fill="#000" />
        <rect x="165" y="66" width="58" height="66" fill="#3236c8" />
        <rect x="237" y="66" width="59" height="66" fill="#069ff5" />
        <rect x="310" y="66" width="59" height="66" fill="#80fffa" />
        <path d="M382 66H448C455 66 458 72 458 78V132H382Z" fill="#000" />
        <path d="M58 148H460C468 155 470 170 462 178L465 198C462 206 450 210 440 210H70C52 210 50 190 52 178C50 165 52 152 58 148Z" fill="#000" />
        <circle cx="135" cy="208" r="40" fill="#fff" />
        <circle cx="135" cy="208" r="34" fill="#000" />
        <circle cx="135" cy="208" r="20" fill="#fff" />
        <circle cx="380" cy="208" r="40" fill="#fff" />
        <circle cx="380" cy="208" r="34" fill="#000" />
        <circle cx="380" cy="208" r="20" fill="#fff" />
      </g>
    </svg>
  );
}

function Nav() {
  return (
    <div className="flex h-[200px] shrink-0 items-center bg-[#f8f9fa] pl-[20px] pr-[50px] text-[36px] text-[#212529]">
      <div className="h-[160px] w-[160px] bg-white"><BusLogo /></div>
      <div className="ml-[370px] flex items-center gap-[69px]">
        <span>Home</span>
        <span>Book Tickets</span>
        <span>My Bookings</span>
        <span>Help</span>
      </div>
      <div className="flex-1" />
      <span className="text-[32px] text-black">Welcome, espin!</span>
      <span className="ml-[60px]">Logout</span>
    </div>
  );
}

function BusCard({ name, type }: { name: string; type: string }) {
  return (
    <div className="flex h-[270px] items-center justify-between rounded-[8px] border-2 border-[#ddd] px-[40px] text-[32px] leading-[47px] text-black">
      <div className="-mt-[4px]">
        <div className="mb-[4px] text-[48px] font-bold leading-[56px]">{name}</div>
        <div className="text-[#808080]">{type}</div>
        <div>Route: Chennai to Kanyakumari</div>
      </div>
      <div className="-mt-[10px] text-center">
        <div>Departure: 19:00</div>
        <div>Duration: 12h 00m</div>
        <div>Arrival: 07:00</div>
        <div>Date: 19-May</div>
      </div>
      <div className="mt-[1px] text-right leading-[37px]">
        <div className="text-[48px] leading-[57px] text-[#e32b28]">INR 1800</div>
        <div>Seats available: 7</div>
        <div>Window: 3</div>
      </div>
      <button className="h-[76px] w-[272px] rounded-[8px] bg-[#e32b28] text-[32px] text-white">VIEW SEATS</button>
    </div>
  );
}

export default function App() {
  return (
    <div className="relative flex h-[1912px] w-[2940px] flex-col overflow-hidden bg-[linear-gradient(#0c0e13_80%,#141724)] font-['Liberation_Sans',sans-serif]">
      <MenuBar />
      <div className="relative z-[1] flex h-[1692px] shrink-0 flex-col overflow-hidden rounded-[20px] border-t-[3px] border-[#4a4d58] bg-[#0a1020]">
        <TabStrip />
        <Toolbar />
        <Bookmarks />
        <div className="flex flex-1 flex-col bg-[linear-gradient(#fff_97%,#f2f2f2)]">
          <Nav />
          <div className="mt-[43px] text-[64px] font-bold leading-[74px] text-black">Bus Search Results</div>
          <div className="mt-[42px] text-[37.44px] font-bold leading-[43px] text-black">Chennai <span className="text-[41px] leading-[43px]">→</span> Kanyakumari</div>
          <div className="mt-[38px] flex flex-col gap-[22px]">
            <BusCard name="SBM TRAANSPORT" type="A/C Sleeper" />
            <BusCard name="Jupiter" type="Bharat Benz A/C Sleeper" />
          </div>
          <a className="mt-[20px] text-[32px] leading-[37px] text-[#551a8b] underline">Go back</a>
        </div>
      </div>
      <div className="absolute left-[2482px] top-[1758px] z-0 font-['Inter',sans-serif] text-[25px] font-bold text-[#5f6066]">OBS</div>
      <div className="absolute right-[39px] top-[1788px] z-0 whitespace-nowrap font-['Inter',sans-serif] text-[28px] font-semibold text-[#c4c5c9]">Untitled Folder 2</div>
      <div className="mt-[30px]"><Dock /></div>
    </div>
  );
}
